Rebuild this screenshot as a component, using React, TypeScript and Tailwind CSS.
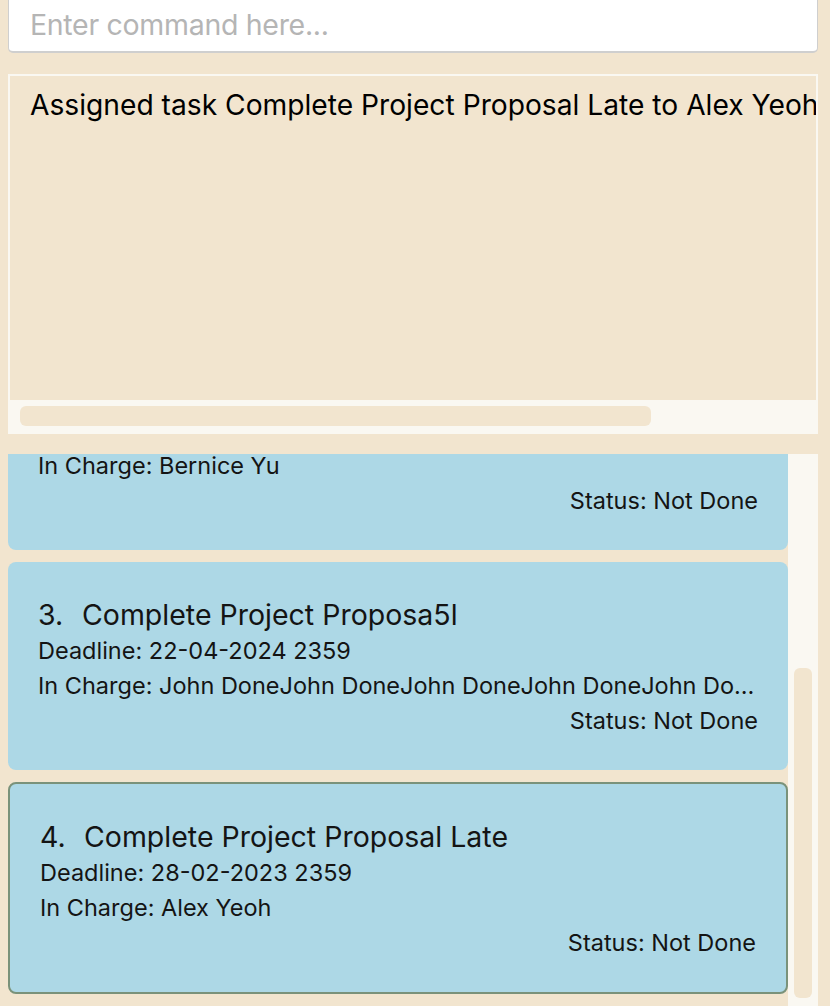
import React from "react";

const font = { fontFamily: "Inter, 'Noto Sans', 'Liberation Sans', sans-serif" };

function Card({
  idx,
  title,
  deadline,
  charge,
  selected,
  className = "",
}: {
  idx: number;
  title: string;
  deadline: string;
  charge: string;
  selected?: boolean;
  className?: string;
}) {
  return (
    <div
      className={`bg-[#add8e6] rounded-[8px] pl-[30px] pr-[30px] pt-[35px] pb-[32px] text-[#141414] ${
        selected ? "border-2 border-[#7a927a]" : ""
      } ${className}`}
    >
      <div className="flex text-[28.5px] leading-[36px] whitespace-nowrap">
        <span className="w-[44px]">{idx}.</span>
        <span>{title}</span>
      </div>
      <div className="text-[23.5px] leading-[35px] whitespace-nowrap">Deadline: {deadline}</div>
      <div className="text-[23.5px] leading-[35px] truncate">In Charge: {charge}</div>
      <div className="text-[23.5px] leading-[35px] text-right">Status: Not Done</div>
    </div>
  );
}

export default function App() {
  return (
    <div
      className="w-[830px] h-[1006px] overflow-hidden bg-[#f2e5cf] pl-[8px] pr-[12px] flex flex-col"
      style={font}
    >
      {/* command box */}
      <div className="h-[53px] shrink-0 bg-white rounded-b-[5px] border-x border-b-2 border-[#cfcfcf] flex items-center pl-[21px]">
        <span className="text-[28.5px] text-[#b5b5b5] tracking-[-0.3px]">Enter command here...</span>
      </div>

      {/* result display */}
      <div className="mt-[21px] h-[360px] shrink-0 border-2 border-[#faf8f2] flex flex-col">
        <div className="flex-1 overflow-hidden whitespace-nowrap pl-[20px] pt-[11px] text-[28.2px] leading-[36px] text-black">
          Assigned task Complete Project Proposal Late to Alex Yeoh
        </div>
        <div className="h-[32px] shrink-0 bg-[#faf8f2] flex items-center pl-[10px]">
          <div className="h-[20px] w-[631px] rounded-[6px] bg-[#f2e5cf]" />
        </div>
      </div>

      {/* list */}
      <div className="mt-[20px] flex-1 flex overflow-hidden">
        <div className="flex-1 overflow-hidden">
          <div className="mt-[-112px] flex flex-col gap-[12px]">
            <Card idx={2} title="Prepare Presentation Slides" deadline="20-04-2024 2359" charge="Bernice Yu" />
            <Card
              idx={3}
              title="Complete Project Proposa5l"
              deadline="22-04-2024 2359"
              charge="John DoneJohn DoneJohn DoneJohn DoneJohn DoneJohn DoneJohn Done"
            />
            <Card
              idx={4}
              title="Complete Project Proposal Late"
              deadline="28-02-2023 2359"
              charge="Alex Yeoh"
              selected
            />
          </div>
        </div>
        <div className="w-[30px] shrink-0 bg-[#faf8f2] flex flex-col pt-[214px] px-[6px]">
          <div className="h-[330px] rounded-[6px] bg-[#f2e5cf]" />
        </div>
      </div>
    </div>
  );
}
